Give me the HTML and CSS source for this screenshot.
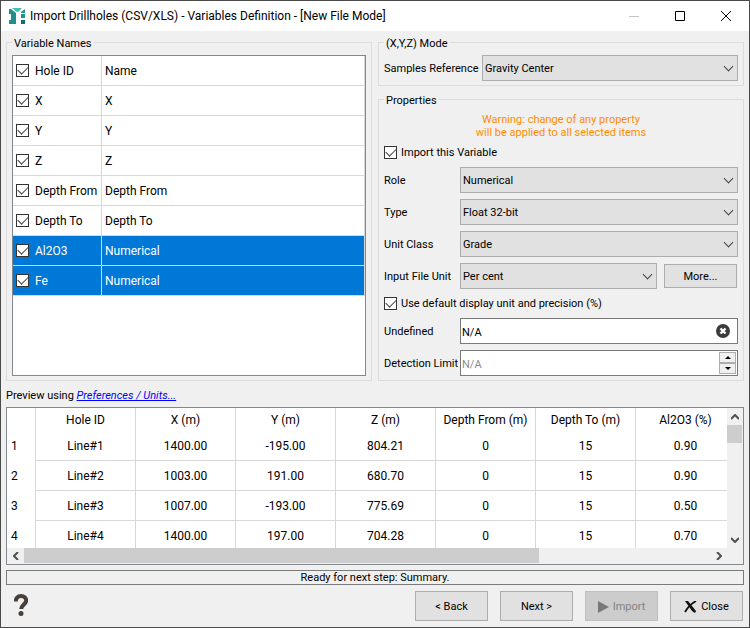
FILE: index.html
```html
<!DOCTYPE html>
<html lang="en">
<head>
<meta charset="utf-8">
<title>Import Drillholes (CSV/XLS)</title>
<link rel="stylesheet" href="styles.css">
</head>
<body>
<div class="window">
  <header class="titlebar">
    <svg class="logo" width="16" height="16" viewBox="0 0 16 16" aria-hidden="true">
      <path fill="#1f918c" d="M0 1h2l5 4v11H0v-4h2V6H0z"/>
      <path fill="#43bdb5" d="M3 0h10L9 4H8z"/>
      <path fill="#1f918c" d="M16 1v4h-4V4z"/>
      <path fill="#1f918c" d="M12 6h4v4h-4z"/>
      <path fill="#136f6c" d="M12 12h4v4h-4z"/>
    </svg>
    <h1 class="title">Import Drillholes (CSV/XLS) - Variables Definition - [New File Mode]</h1>
    <button class="winbtn" aria-label="Minimize" disabled><svg width="10" height="10"><path d="M0 5.5h10" stroke="#c4c4c4"/></svg></button>
    <button class="winbtn" aria-label="Maximize"><svg width="10" height="10"><path d="M.5.5h9v9h-9z" fill="none" stroke="#000"/></svg></button>
    <button class="winbtn" aria-label="Close window"><svg width="10" height="10"><path d="M0 0l10 10M10 0L0 10" stroke="#000"/></svg></button>
  </header>

  <main class="content">
    <div class="columns">
      <section class="group">
        <h2 class="legend">Variable Names</h2>
        <div class="list">
          <table class="vars">
            <tr><td><label><input type="checkbox" checked>Hole ID</label></td><td>Name</td></tr>
            <tr><td><label><input type="checkbox" checked>X</label></td><td>X</td></tr>
            <tr><td><label><input type="checkbox" checked>Y</label></td><td>Y</td></tr>
            <tr><td><label><input type="checkbox" checked>Z</label></td><td>Z</td></tr>
            <tr><td><label><input type="checkbox" checked>Depth From</label></td><td>Depth From</td></tr>
            <tr><td><label><input type="checkbox" checked>Depth To</label></td><td>Depth To</td></tr>
            <tr class="selected"><td><label><input type="checkbox" checked>Al2O3</label></td><td>Numerical</td></tr>
            <tr class="selected"><td><label><input type="checkbox" checked>Fe</label></td><td>Numerical</td></tr>
          </table>
        </div>
      </section>

      <div class="side">
        <section class="group">
          <h2 class="legend">(X,Y,Z) Mode</h2>
          <div class="row mode">
            <label for="ref">Samples Reference</label>
            <span class="combo"><select id="ref"><option>Gravity Center</option></select></span>
          </div>
        </section>
        <section class="group props">
          <h2 class="legend">Properties</h2>
          <p class="warning">Warning: change of any property<br>will be applied to all selected items</p>
          <label class="check"><input type="checkbox" checked><span>Import this Variable</span></label>
          <div class="row">
            <label for="role">Role</label>
            <span class="combo"><select id="role"><option>Numerical</option></select></span>
          </div>
          <div class="row">
            <label for="type">Type</label>
            <span class="combo"><select id="type"><option>Float 32-bit</option></select></span>
          </div>
          <div class="row">
            <label for="class">Unit Class</label>
            <span class="combo"><select id="class"><option>Grade</option></select></span>
          </div>
          <div class="row with-button">
            <label for="unit">Input File Unit</label>
            <span class="combo"><select id="unit"><option>Per cent</option></select></span>
            <button class="btn more">More...</button>
          </div>
          <label class="check"><input type="checkbox" checked><span>Use default display unit and precision (%)</span></label>
          <div class="row">
            <label for="undef">Undefined</label>
            <span class="field">
              <input id="undef" type="text" value="N/A">
              <button class="clear" aria-label="Clear"><svg width="14" height="14" viewBox="0 0 14 14"><circle cx="7" cy="7" r="7" fill="#3c3c3c"/><path d="M4.500 4.500l5 5M9.500 4.500l-5 5" stroke="#fff" stroke-width="2.400"/></svg></button>
            </span>
          </div>
          <div class="row">
            <label for="limit">Detection Limit</label>
            <span class="field">
              <input id="limit" type="text" value="N/A" disabled>
              <span class="spin">
                <button aria-label="Increase"><svg width="6" height="3"><path d="M3 0l3 3H0z"/></svg></button>
                <button aria-label="Decrease"><svg width="6" height="3"><path d="M0 0h6L3 3z"/></svg></button>
              </span>
            </span>
          </div>
        </section>
      </div>
    </div>

    <p class="preview">Preview using <a href="#units">Preferences / Units...</a></p>

    <div class="grid">
      <div class="viewport">
        <table class="data">
          <colgroup><col class="num"><col><col><col><col><col><col><col></colgroup>
          <thead>
            <tr><th></th><th>Hole ID</th><th>X (m)</th><th>Y (m)</th><th>Z (m)</th><th>Depth From (m)</th><th>Depth To (m)</th><th>Al2O3 (%)</th></tr>
          </thead>
          <tbody>
            <tr><th>1</th><td>Line#1</td><td>1400.00</td><td>-195.00</td><td>804.21</td><td>0</td><td>15</td><td>0.90</td></tr>
            <tr><th>2</th><td>Line#2</td><td>1003.00</td><td>191.00</td><td>680.70</td><td>0</td><td>15</td><td>0.90</td></tr>
            <tr><th>3</th><td>Line#3</td><td>1007.00</td><td>-193.00</td><td>775.69</td><td>0</td><td>15</td><td>0.50</td></tr>
            <tr><th>4</th><td>Line#4</td><td>1400.00</td><td>197.00</td><td>704.28</td><td>0</td><td>15</td><td>0.70</td></tr>
          </tbody>
        </table>
      </div>
      <div class="vbar">
        <button aria-label="Scroll up"><svg width="8" height="6"><path d="M0 5l4-4 4 4" /></svg></button>
        <div class="vthumb"></div>
        <button aria-label="Scroll down"><svg width="8" height="6"><path d="M0 1l4 4 4-4"/></svg></button>
      </div>
      <div class="hbar">
        <button aria-label="Scroll left"><svg width="6" height="8"><path d="M5 0L1 4l4 4"/></svg></button>
        <div class="track"><div class="hthumb"></div></div>
        <button aria-label="Scroll right"><svg width="6" height="8"><path d="M1 0l4 4-4 4"/></svg></button>
      </div>
    </div>

    <div class="status" role="status">Ready for next step: Summary.</div>

    <footer class="actions">
      <button class="help" aria-label="Help"><svg width="14" height="22" viewBox="0 0 14 22"><path d="M1.800 7.500C1.800 4 4 2 7 2s5.200 1.800 5.200 4.600c0 3.600-5 4.200-5 8.400" fill="none" stroke="#473f38" stroke-width="4"/><circle cx="7" cy="19.500" r="2.500" fill="#473f38"/></svg></button>
      <button class="btn">&lt; Back</button>
      <button class="btn">Next &gt;</button>
      <button class="btn" disabled><svg width="11" height="12"><path d="M0 0l11 6-11 6z" fill="#787878"/></svg>Import</button>
      <button class="btn"><svg width="13" height="12" viewBox="0 0 13 12"><path d="M1 0h3l8 10-1 2-3-2z" fill="#111"/><path d="M12 0Q5 4 1 11" fill="none" stroke="#111" stroke-width="1.800"/></svg>Close</button>
    </footer>
  </main>
</div>
</body>
</html>
```
FILE: styles.css
```css
* { box-sizing: border-box; }
body {
  margin: 0;
  font: 11px/14px Roboto, "Noto Sans", sans-serif;
  color: #000;
}
h1, h2, p { margin: 0; font: inherit; }
button, input, select { font: inherit; color: inherit; margin: 0; padding: 0; border: 0; background: none; border-radius: 0; }
svg { display: block; flex: none; }

.window {
  min-height: 100vh;
  display: flex;
  flex-direction: column;
  border: 1px solid #4a4a4a;
  background: #f0f0f0;
}
.titlebar { display: flex; align-items: center; height: 30px; padding-left: 8px; background: #fff; }
.title { flex: 1; padding-left: 5px; font: 12px/16px Roboto, "Noto Sans", sans-serif; white-space: nowrap; }
.winbtn { width: 46px; height: 30px; display: grid; place-items: center; }

.content { flex: 1; display: flex; flex-direction: column; padding: 5px; }
.columns { display: grid; grid-template-columns: 1fr 1fr; gap: 6px; }
.group {
  display: flex;
  flex-direction: column;
  margin-top: 6px;
  padding: 0 5px 4px;
  border: 1px solid #dcdcdc;
}
.legend { align-self: flex-start; margin: -6px 0 4px; padding: 0 2px; background: #f0f0f0; }
.side { display: flex; flex-direction: column; gap: 7px; }
.props { flex: 1; }

.list { flex: 1; border: 1px solid #828790; background: #fff; }
.vars { width: 100%; border-collapse: separate; border-spacing: 0; table-layout: fixed; font: 12px/16px Roboto, "Noto Sans", sans-serif; }
.vars td { height: 30px; padding: 0 3px; border: solid #d8d8d8; border-width: 0 1px 1px 0; white-space: nowrap; }
.vars td:first-child { width: 89px; }
.vars label { display: flex; align-items: center; gap: 6px; }
.selected { background: #0078d7; color: #fff; }

input[type="checkbox"] {
  appearance: none;
  display: grid;
  place-items: center;
  flex: none;
  width: 13px;
  height: 13px;
  border: 1px solid #333;
  background: #fff;
}
input[type="checkbox"]:checked::after {
  content: "";
  width: 9px;
  height: 5px;
  margin-bottom: 3px;
  border: solid #444;
  border-width: 0 0 1px 1px;
  transform: rotate(-45deg);
}

.row { display: grid; grid-template-columns: 76px 1fr; align-items: center; height: 26px; margin-bottom: 6px; }
.row label, .check span { padding-top: 2px; }
.row.with-button { grid-template-columns: 76px 1fr 73px; padding-right: 1px; }
.row.with-button .combo { margin-right: 7px; }
.row.mode { grid-template-columns: 98px 1fr; margin-bottom: 0; }
.row:last-child { margin-bottom: 0; }
.combo { display: grid; align-items: center; height: 26px; border: 1px solid #adadad; background: #e1e1e1; }
.combo select { grid-area: 1 / 1; width: 100%; height: 24px; padding: 2px 0 0 2px; appearance: none; }
.combo::after {
  content: "";
  grid-area: 1 / 1;
  justify-self: end;
  width: 6px;
  height: 6px;
  margin: 0 5px 4px 0;
  border: solid #444;
  border-width: 0 1px 1px 0;
  transform: rotate(45deg);
  pointer-events: none;
}
.warning { padding-top: 1px; text-align: center; line-height: 13px; color: #ff8c00; }
.check { display: flex; align-items: center; gap: 4px; height: 16px; margin-bottom: 7px; }
.warning + .check { margin-top: 5px; }
.field { display: flex; align-items: center; height: 26px; border: 1px solid #7a7a7a; background: #fff; }
.field input { flex: 1; min-width: 0; height: 24px; padding: 2px 1px 0; }
.field input:disabled { color: #8a8a8a; }
.clear { margin-right: 7px; }
.spin { display: grid; grid-template-rows: 1fr 1fr; width: 17px; height: 22px; margin-right: 1px; }
.spin button { display: grid; place-items: center; border: 1px solid #adadad; background: #f0f0f0; }

.btn {
  display: flex;
  align-items: center;
  justify-content: center;
  gap: 4px;
  width: 73px;
  height: 30px;
  padding-top: 2px;
  border: 1px solid #adadad;
  background: #e1e1e1;
}
.btn:disabled { color: #838383; background: #ccc; border-color: #bfbfbf; }
.more { height: 24px; }

.preview { padding: 8px 0 4px; }
.preview a { color: #00f; font-style: italic; text-decoration: underline; }

.grid { display: grid; grid-template-columns: 1fr 16px; border: 1px solid #828790; background: #f0f0f0; }
.viewport { height: 140px; overflow: hidden; background: #fff; }
.data { width: 729px; border-collapse: separate; border-spacing: 0; table-layout: fixed; font: 12px/16px Roboto, "Noto Sans", sans-serif; text-align: center; }
.data col { width: 100px; }
.data .num { width: 29px; }
.data th, .data td { height: 30px; padding: 0; font-weight: 400; border: solid #d8d8d8; border-width: 0 1px 1px 0; white-space: nowrap; }
.data thead th { height: 23px; border-bottom: 0; }
.data tbody th { text-align: left; padding-left: 4px; border-bottom: 0; }
.vbar { display: flex; flex-direction: column; }
.vbar button { height: 17px; display: grid; place-items: center; }
.vbar button:last-child { margin-top: auto; }
.vbar path, .hbar path { fill: none; stroke: #505050; stroke-width: 2; }
.vthumb { width: 15px; height: 18px; background: #cdcdcd; }
.hbar { display: flex; height: 16px; padding-bottom: 1px; }
.hbar button { width: 17px; display: grid; place-items: center; }
.track { flex: 1; }
.hthumb { width: 75%; height: 15px; background: #cdcdcd; }

.status { height: 15px; margin-top: 5px; border: 1px solid #7a7a7a; text-align: center; line-height: 14px; }
.actions { display: flex; gap: 12px; margin-top: 6px; padding-right: 1px; }
.help { margin: 3px auto 0 8px; align-self: flex-start; }
```
